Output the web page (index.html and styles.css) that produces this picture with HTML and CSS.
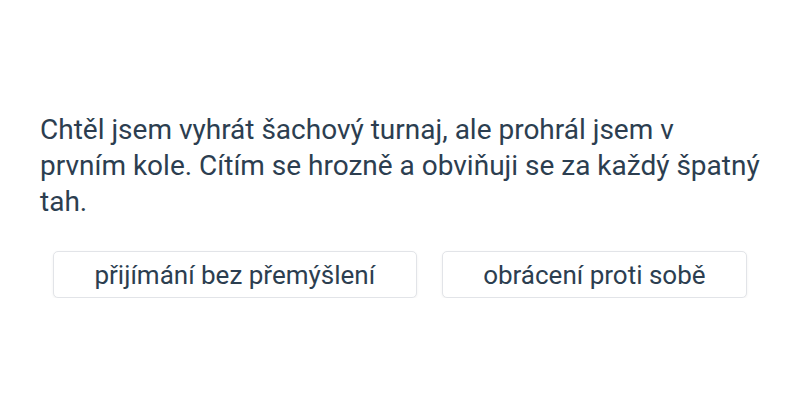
FILE: index.html
```html
<!DOCTYPE html>
<html lang="cs">
<head>
    <title>Otázka</title>
    <link rel="stylesheet" href="styles.css">
</head>
<body>
    <div class="card">
        <p class="question">Chtěl jsem vyhrát šachový turnaj, ale prohrál jsem v prvním kole. Cítím se hrozně a obviňuji se za každý špatný tah.</p>
        <div class="options">
            <button type="button" class="option">přijímání bez přemýšlení</button>
            <button type="button" class="option">obrácení proti sobě</button>
        </div>
    </div>
</body>
</html>
```

FILE: styles.css
```css
body{
    margin: 0;
    background: #fff;
    font-family: Roboto, "Noto Sans", sans-serif;
    color: #2c3e50;
}
.card{
    width: 720px;
    margin: 0 auto;
    padding-top: 112px;
}
.question{
    margin: 0;
    font-size: 28px;
    line-height: 36px;
}
.options{
    display: flex;
    justify-content: center;
    gap: 25px;
    margin-top: 31px;
}
.option{
    height: 47px;
    padding: 0 40.5px;
    font-family: Roboto, sans-serif;
    font-size: 26px;
    color: #2c3e50;
    background: #fff;
    border: 1px solid #e2e4e8;
    border-radius: 5px;
    box-shadow: 0 1px 3px rgba(0, 0, 0, 0.06);
    cursor: pointer;
}
```
